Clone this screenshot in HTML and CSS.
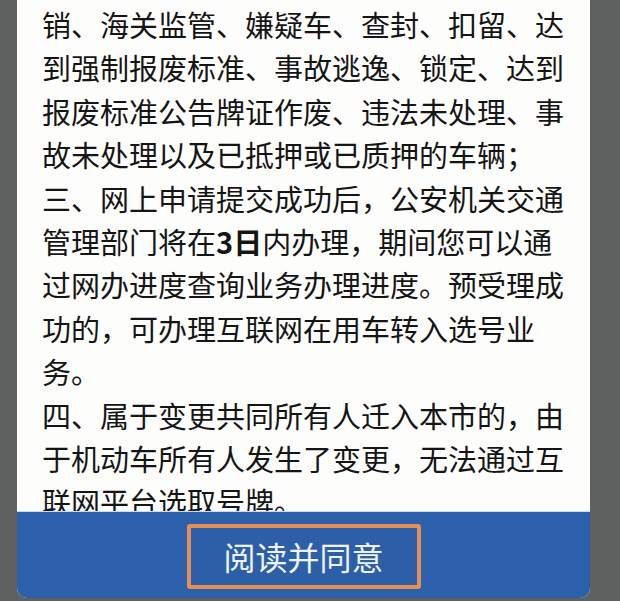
FILE: index.html
```html
<!DOCTYPE html>
<html lang="zh-CN">
<head>
<meta charset="utf-8">
<title>须知</title>
<link rel="stylesheet" href="styles.css">
</head>
<body>
<div class="panel">
  <div class="content">
    <p class="notice">销、海关监管、嫌疑车、查封、扣留、达到强制报废标准、事故逃逸、锁定、达到报废标准公告牌证作废、违法未处理、事故未处理以及已抵押或已质押的车辆；</p>
    <p class="notice">三、网上申请提交成功后，公安机关交通管理部门将在<b>3日</b>内办理，期间您可以通过网办进度查询业务办理进度。预受理成功的，可办理互联网在用车转入选号业务。</p>
    <p class="notice">四、属于变更共同所有人迁入本市的，由于机动车所有人发生了变更，无法通过互联网平台选取号牌。</p>
  </div>
  <div class="footer">
    <button class="agree" type="button">阅读并同意</button>
  </div>
</div>
</body>
</html>
```
FILE: styles.css
```css
html, body {
  margin: 0;
  padding: 0;
  background: #5e615f;
  height: 100%;
  overflow: hidden;
}
body {
  font-family: "Noto Sans CJK SC", "Noto Sans", sans-serif;
}
.panel {
  margin-left: 17px;
  width: 573px;
  height: 598px;
  display: flex;
  flex-direction: column;
  background: #fdfdfc;
  border-radius: 0 0 10px 10px;
  overflow: hidden;
}
.content {
  flex: 1;
  overflow: hidden;
  padding: 3px 24px 0 25px;
  min-height: 0;
}
.notice {
  margin: 0;
  font-size: 29px;
  line-height: 43.4px;
  color: #151515;
}
.notice b {
  font-weight: 700;
}
.footer {
  flex: 0 0 86px;
  background: #2d60ab;
  border-top: 1px solid #c9dcef;
  display: flex;
  align-items: center;
  justify-content: center;
}
.agree {
  width: 234px;
  height: 65px;
  box-sizing: border-box;
  border: 4px solid #e48f53;
  border-radius: 3px;
  background: #2d5fa9;
  color: #eef3f8;
  font-family: "Noto Sans CJK SC", "Noto Sans", sans-serif;
  font-size: 32px;
  padding: 0;
  margin-top: 2px;
}
```
